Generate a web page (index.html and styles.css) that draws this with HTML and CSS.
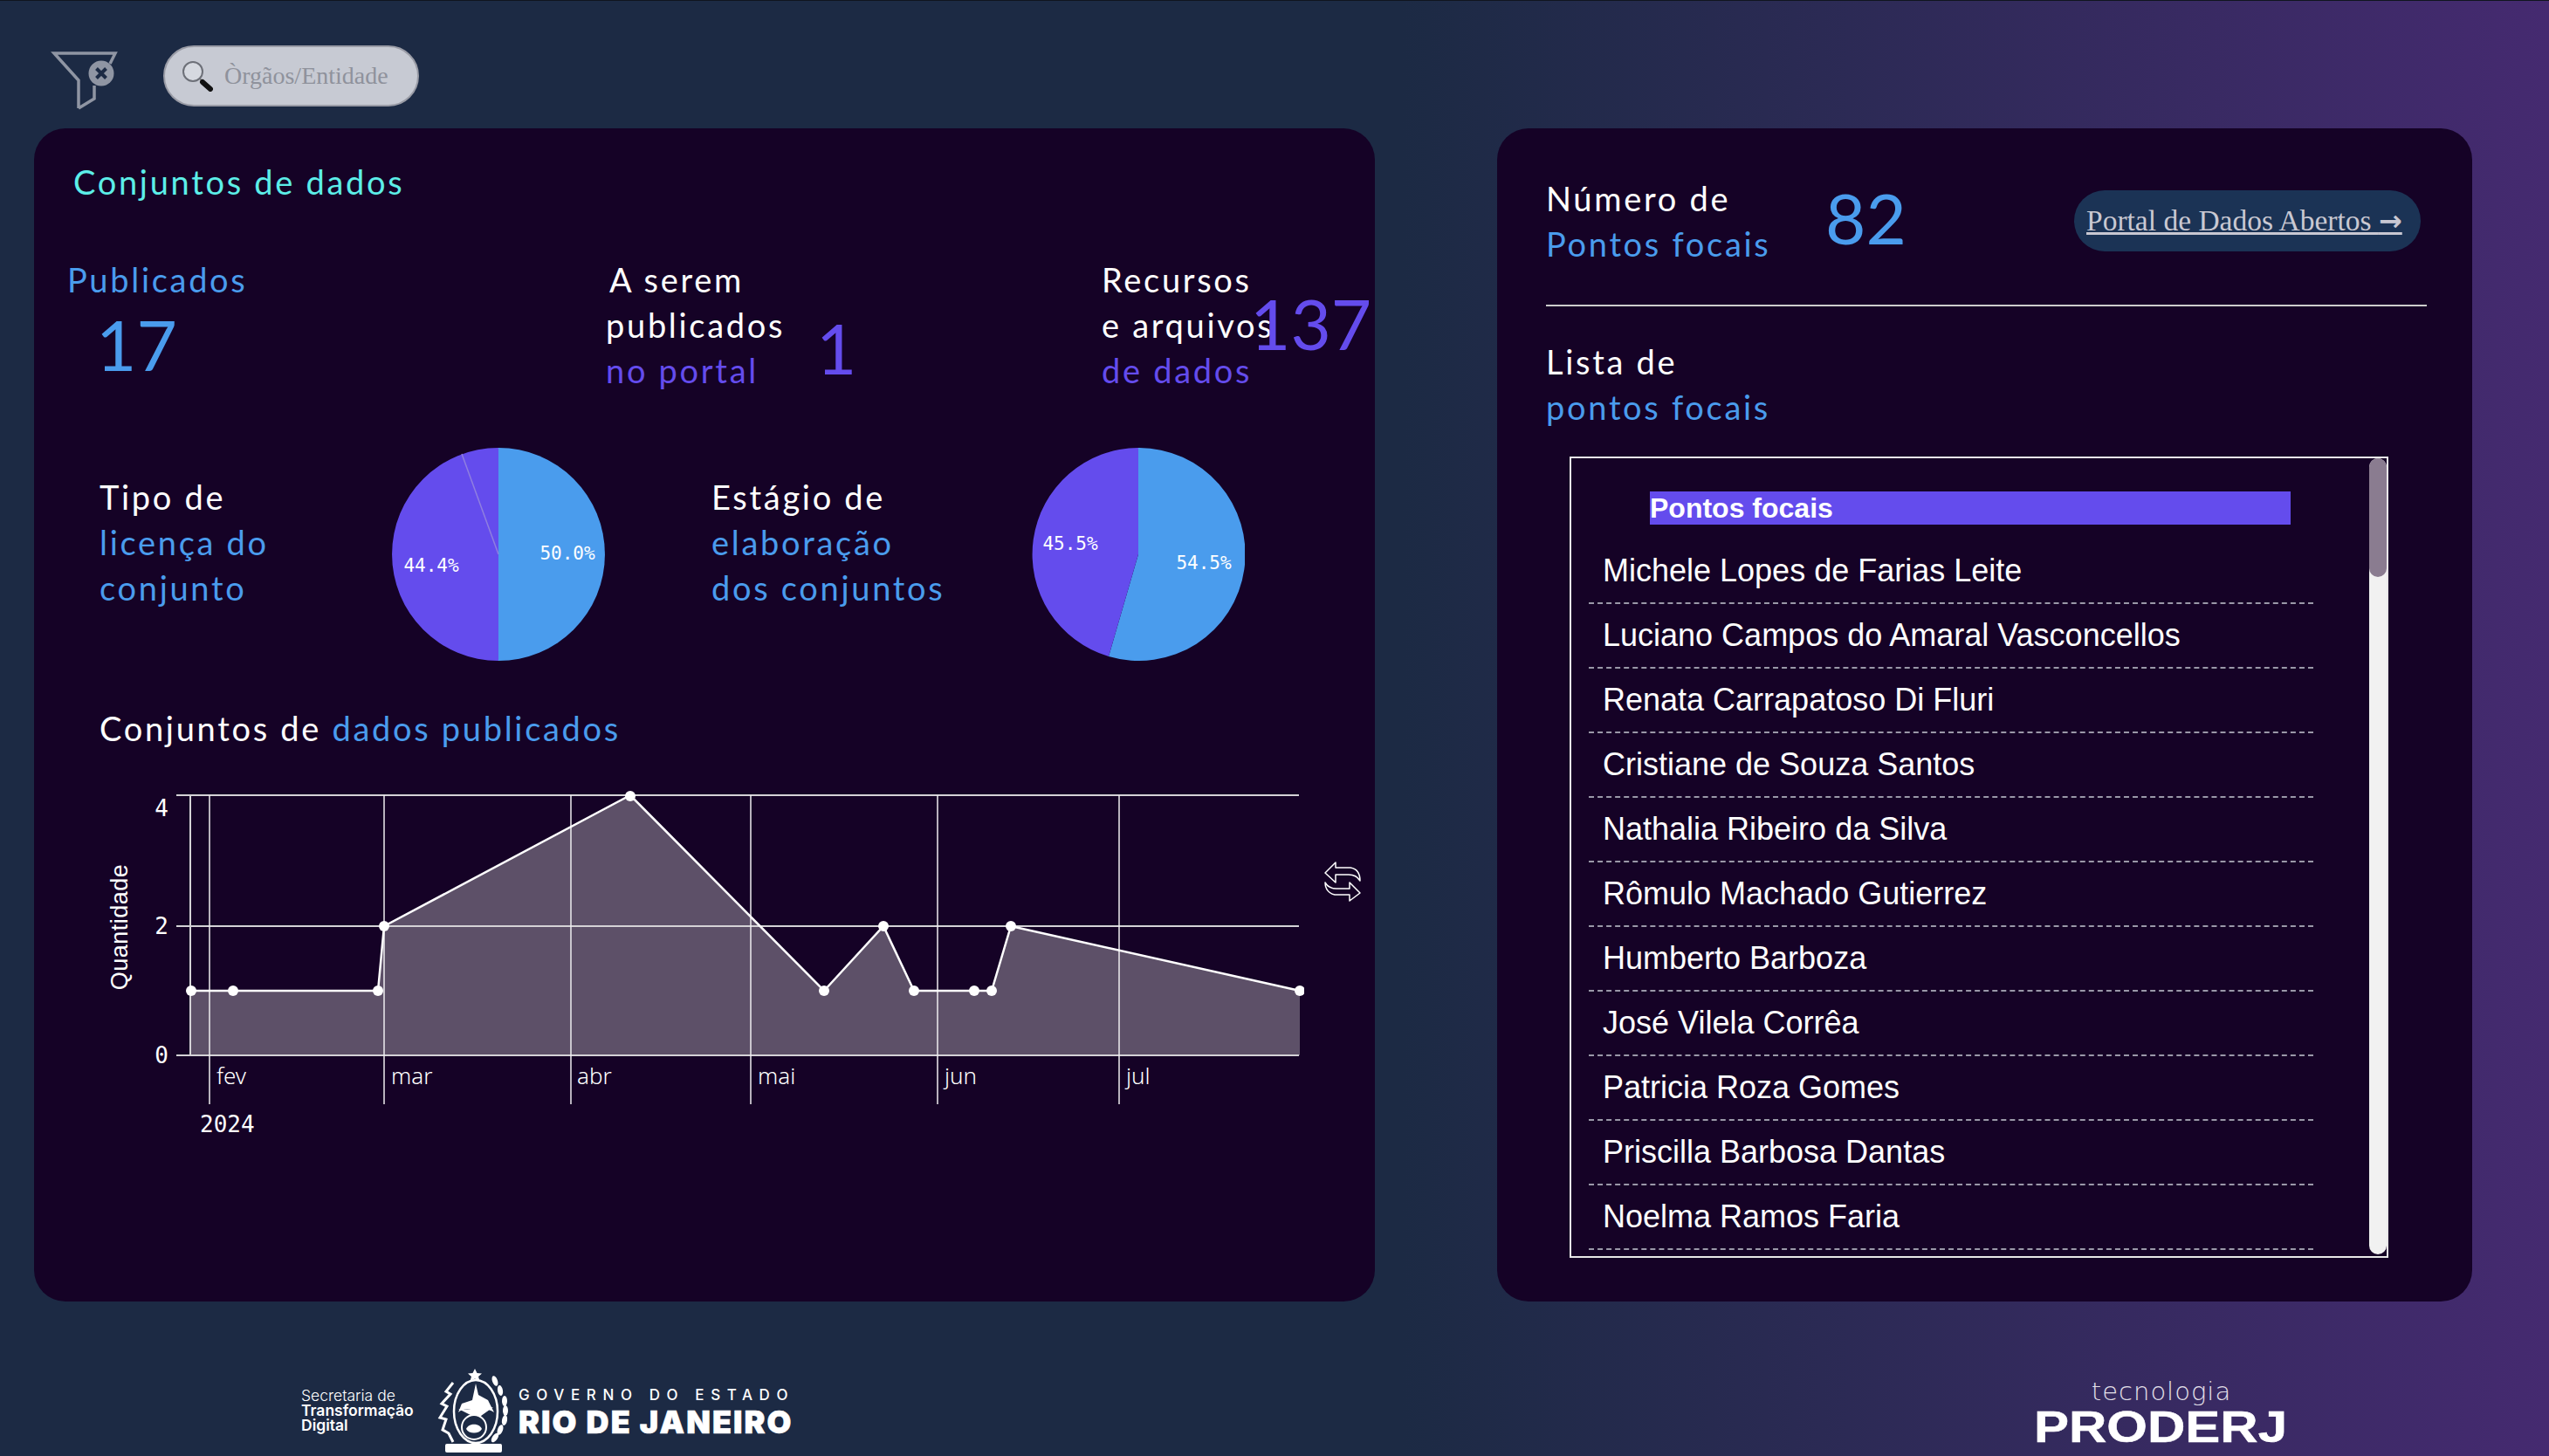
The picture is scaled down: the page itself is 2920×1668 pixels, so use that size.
FILE: index.html
```html
<!DOCTYPE html>
<html lang="pt-BR">
<head>
    <meta charset="UTF-8">
    <title>Painel de Dados Abertos</title>
    <link rel="stylesheet" href="styles.css">
</head>
<body>

    <div class="topbar">
        <svg class="filter-icon" viewBox="0 0 80 72" width="80" height="72">
            <path d="M32 66V34L4 3H74L68 15M32 66L50 55V40" fill="none" stroke="#8f95a3" stroke-width="3.5"/>
            <circle cx="58" cy="26" r="14.5" fill="#8f95a3"/>
            <path d="M52.5 20.5L63.5 31.5M63.5 20.5L52.5 31.5" stroke="#1c2a44" stroke-width="4"/>
        </svg>
        <div class="search">
            <svg class="search-icon" viewBox="0 0 36 36" width="36" height="36">
                <line x1="21" y1="21" x2="24" y2="25" stroke="#777" stroke-width="2"/>
                <line x1="24" y1="25" x2="33" y2="33" stroke="#111" stroke-width="6" stroke-linecap="round"/>
                <circle cx="13" cy="13" r="11" fill="#d6d9e0" stroke="#6d7078" stroke-width="2"/>
            </svg>
            <span>Òrgãos/Entidade</span>
        </div>
    </div>

    <main class="cards">
        <section class="card card-left">
            <h2 class="card-title">Conjuntos de dados</h2>

            <div class="stats">
                <div class="stat stat-one">
                    <div class="text blue">Publicados</div>
                    <div class="number blue number-17">17</div>
                </div>
                <div class="stat stat-two">
                    <div class="text stat-text-two"><span class="indent">A serem</span><br>publicados<br><span class="purple">no portal</span></div>
                    <div class="number purple number-1">1</div>
                </div>
                <div class="stat stat-three">
                    <div class="text stat-text-three">Recursos<br>e arquivos<br><span class="purple">de dados</span></div>
                    <div class="number purple number-137">137</div>
                </div>
            </div>

            <div class="pies">
                <div class="text pie-text-one">Tipo de<br><span class="blue">licença do<br>conjunto</span></div>
                <svg class="pie" viewBox="0 0 244 244" width="244" height="244">
                    <path d="M122 122V0A122 122 0 0 1 122 244Z" fill="#4a9ced"/>
                    <path d="M122 122V244A122 122 0 0 1 122 0Z" fill="#644ced"/>
                    <line x1="122" y1="122" x2="80" y2="7" stroke="#8f7fe0" stroke-width="1.5"/>
                    <text class="pie-label" x="201" y="128" text-anchor="middle">50.0%</text>
                    <text class="pie-label" x="45" y="142" text-anchor="middle">44.4%</text>
                </svg>
                <div class="text pie-text-two">Estágio de<br><span class="blue">elaboração<br>dos conjuntos</span></div>
                <svg class="pie" viewBox="0 0 244 244" width="244" height="244">
                    <path d="M122 122V0A122 122 0 1 1 88 239Z" fill="#4a9ced"/>
                    <path d="M122 122L88 239A122 122 0 0 1 122 0Z" fill="#644ced"/>
                    <text class="pie-label" x="197" y="139" text-anchor="middle">54.5%</text>
                    <text class="pie-label" x="44" y="117" text-anchor="middle">45.5%</text>
                </svg>
            </div>

            <div class="text chart-title">Conjuntos de <span class="blue">dados publicados</span></div>

            <div class="chart-row">
                <svg class="chart" viewBox="114 880 1380 430" width="1380" height="430">
                    <path d="M218 1209V1135H267H433L440 1061L722 911L944 1135L1012 1061L1047 1135H1116H1136L1158 1061L1489 1135V1209Z" fill="#5d5068"/>
                    <g stroke="#d4d2d6" stroke-width="2">
                        <line x1="202" y1="911" x2="1488" y2="911"/>
                        <line x1="202" y1="1061" x2="1488" y2="1061"/>
                        <line x1="202" y1="1209" x2="1488" y2="1209"/>
                        <line x1="218" y1="911" x2="218" y2="1209"/>
                    </g>
                    <g stroke="#efeef0" stroke-width="1.5">
                        <line x1="240" y1="911" x2="240" y2="1265"/>
                        <line x1="440" y1="911" x2="440" y2="1265"/>
                        <line x1="654" y1="911" x2="654" y2="1265"/>
                        <line x1="860" y1="911" x2="860" y2="1265"/>
                        <line x1="1074" y1="911" x2="1074" y2="1265"/>
                        <line x1="1282" y1="911" x2="1282" y2="1265"/>
                    </g>
                    <polyline points="219,1135 267,1135 433,1135 440,1061 722,911 944,1135 1012,1061 1047,1135 1116,1135 1136,1135 1158,1061 1489,1135" fill="none" stroke="#fff" stroke-width="2.5"/>
                    <g fill="#fff">
                        <circle cx="219" cy="1135" r="6"/>
                        <circle cx="267" cy="1135" r="6"/>
                        <circle cx="433" cy="1135" r="6"/>
                        <circle cx="440" cy="1061" r="6"/>
                        <circle cx="722" cy="912" r="6"/>
                        <circle cx="944" cy="1135" r="6"/>
                        <circle cx="1012" cy="1061" r="6"/>
                        <circle cx="1047" cy="1135" r="6"/>
                        <circle cx="1116" cy="1135" r="6"/>
                        <circle cx="1136" cy="1135" r="6"/>
                        <circle cx="1158" cy="1061" r="6"/>
                        <circle cx="1489" cy="1135" r="6"/>
                    </g>
                    <text class="axis-num" x="193" y="935" text-anchor="end">4</text>
                    <text class="axis-num" x="193" y="1070" text-anchor="end">2</text>
                    <text class="axis-num" x="193" y="1218" text-anchor="end">0</text>
                    <text class="axis-title" transform="translate(146 1062) rotate(-90)" text-anchor="middle">Quantidade</text>
                    <text class="axis-month" x="248" y="1242">fev</text>
                    <text class="axis-month" x="448" y="1242">mar</text>
                    <text class="axis-month" x="661" y="1242">abr</text>
                    <text class="axis-month" x="868" y="1242">mai</text>
                    <text class="axis-month" x="1082" y="1242">jun</text>
                    <text class="axis-month" x="1290" y="1242">jul</text>
                    <text class="axis-num" x="229" y="1297">2024</text>
                </svg>
                <svg class="swap-icon" viewBox="0 0 42 46" width="42" height="46">
                    <path d="M1 13L13 1V7H30C36 8 41 12 41 22C38 17 34 15 28 15H13V24Z" fill="none" stroke="#fff" stroke-width="1.5" stroke-linejoin="round"/>
                    <path d="M41 36L29 45V38H12C6 37 1 32 1 24C4 29 8 31 14 31H29V24Z" fill="none" stroke="#fff" stroke-width="1.5" stroke-linejoin="round"/>
                </svg>
            </div>
        </section>

        <section class="card card-right">
            <div class="focal-head">
                <div class="text">Número de<br><span class="blue">Pontos focais</span></div>
                <div class="number blue number-82">82</div>
                <a class="portal-link" href="#">Portal de Dados Abertos <span class="arrow">→</span></a>
            </div>

            <div class="text list-title">Lista de<br><span class="blue">pontos focais</span></div>

            <div class="list-box">
                <div class="list-header">Pontos focais</div>
                <ul class="focal-list">
                    <li>Michele Lopes de Farias Leite</li>
                    <li>Luciano Campos do Amaral Vasconcellos</li>
                    <li>Renata Carrapatoso Di Fluri</li>
                    <li>Cristiane de Souza Santos</li>
                    <li>Nathalia Ribeiro da Silva</li>
                    <li>Rômulo Machado Gutierrez</li>
                    <li>Humberto Barboza</li>
                    <li>José Vilela Corrêa</li>
                    <li>Patricia Roza Gomes</li>
                    <li>Priscilla Barbosa Dantas</li>
                    <li>Noelma Ramos Faria</li>
                </ul>
                <div class="scroll-track"><div class="scroll-thumb"></div></div>
            </div>
        </section>
    </main>

    <footer class="footer">
        <div class="gov-logo">
            <div class="secretaria">Secretaria de<br><strong>Transformação<br>Digital</strong></div>
            <svg class="arms" viewBox="0 0 82 96" width="82" height="96">
                <polygon points="43,0 45.5,5 51,5.5 47,9 48.5,14 43,11.5 37.5,14 39,9 35,5.5 40.500,5" fill="#fff"/>
                <ellipse cx="44" cy="49" rx="25" ry="36" fill="none" stroke="#fff" stroke-width="2.5"/>
                <path d="M44 17L47 30L58 36L65 50C56 44 48 46 44 50C38 45 30 45 24 50L28 40L40 36Z" fill="#fff"/>
                <path d="M24 46C34 47 50 47 64 44L50 54L44 60L38 53Z" fill="#fff"/>
                <circle cx="42" cy="67" r="14" fill="#1c2a44" stroke="#fff" stroke-width="2"/>
                <path d="M33 69C36 62 48 62 51 69C48 75 36 75 33 69Z" fill="#fff"/>
                <path d="M18 16L10 26L15 29L5 40L11 43L3 56L10 58L6 70L13 74L18 84" fill="none" stroke="#fff" stroke-width="3"/>
                <g fill="#fff">
                    <ellipse cx="66" cy="14" rx="3" ry="6" transform="rotate(-20 66 14)"/>
                    <ellipse cx="72" cy="25" rx="3" ry="6" transform="rotate(-10 72 25)"/>
                    <ellipse cx="77" cy="37" rx="3" ry="6"/>
                    <ellipse cx="78" cy="48" rx="3" ry="6"/>
                    <ellipse cx="77" cy="59" rx="3" ry="6" transform="rotate(10 77 59)"/>
                    <ellipse cx="72" cy="70" rx="3" ry="6" transform="rotate(20 72 70)"/>
                    <ellipse cx="66" cy="79" rx="3" ry="6" transform="rotate(35 66 79)"/>
                    <rect x="9" y="86" width="65" height="10" rx="2"/>
                </g>
            </svg>
            <div class="gov-name">
                <div class="gov-top">GOVERNO DO ESTADO</div>
                <div class="gov-bottom">RIO DE JANEIRO</div>
            </div>
        </div>
        <div class="proderj-logo">
            <div class="proderj-top">tecnologia</div>
            <div class="proderj-name">PRODERJ</div>
        </div>
    </footer>

</body>
</html>
```

FILE: styles.css
```css
html, body {
    margin: 0;
    height: 100%;
}

body {
    display: flex;
    flex-direction: column;
    box-sizing: border-box;
    height: 1668px;
    overflow: hidden;
    border-top: 1px solid #10151f;
    background: linear-gradient(to right, #1c2a44 55%, #452a70);
    font-family: Lato, "Noto Sans", sans-serif;
    color: white;
}

.topbar {
    display: flex;
    align-items: center;
    box-sizing: border-box;
    height: 146px;
    padding: 26px 0 0 58px;
}

.filter-icon {
    margin-top: 14px;
}

.search {
    display: flex;
    align-items: center;
    box-sizing: border-box;
    width: 293px;
    height: 70px;
    margin-left: 49px;
    padding-left: 19px;
    background: #c7cad3;
    border: 2px solid #9a9ca6;
    border-radius: 35px;
    font-family: "Liberation Serif", serif;
    font-size: 28px;
    color: #8f929c;
}

.search-icon {
    margin-right: 13px;
}

.cards {
    display: flex;
    justify-content: space-between;
    padding: 0 88px 0 39px;
}

.card {
    box-sizing: border-box;
    height: 1344px;
    background: #150226;
    border-radius: 36px;
}

.card-left {
    width: 1536px;
}

.card-right {
    width: 1117px;
    padding: 56px 52px 0 56px;
}

.text {
    font-size: 38px;
    line-height: 52px;
    letter-spacing: 2.7px;
    white-space: nowrap;
}

.blue {
    color: #4a9ced;
}

.purple {
    color: #644ced;
}

.number {
    font-size: 80px;
    line-height: 90px;
}

.card-title {
    margin: 35px 0 0 45px;
    font-size: 38px;
    font-weight: 400;
    line-height: 52px;
    letter-spacing: 2.7px;
    color: #5ceee8;
}

.stats {
    display: flex;
    height: 156px;
    margin-top: 60px;
    padding-left: 38px;
}

.stat-one {
    width: 617px;
}

.number-17 {
    margin: 3px 0 0 33px;
}

.stat-two {
    display: flex;
    align-items: flex-end;
    width: 568px;
}

.indent {
    margin-left: 4px;
}

.stat-text-two {
    width: 241px;
}

.number-1 {
    margin-bottom: 7px;
}

.stat-three {
    display: flex;
    align-items: flex-end;
}

.stat-text-three {
    width: 170px;
}

.number-137 {
    margin-bottom: 35px;
}

.pies {
    display: flex;
    margin-top: 63px;
    padding-left: 75px;
}

.pie-text-one {
    width: 335px;
    margin-top: 30px;
}

.pie-text-two {
    width: 367px;
    margin: 30px 0 0 122px;
}

.pie {
    flex: none;
}

.pie-label {
    font-family: "DejaVu Sans Mono", monospace;
    font-size: 21px;
    fill: #fff;
}

.chart-title {
    margin: 51px 0 0 75px;
}

.chart-row {
    display: flex;
    margin: 20px 0 0 75px;
}

.chart {
    flex: none;
}

.swap-icon {
    flex: none;
    margin: 107px 0 0 23px;
}

.axis-num {
    font-family: "DejaVu Sans Mono", monospace;
    font-size: 26px;
    fill: #fff;
}

.axis-month {
    font-family: "Noto Sans", sans-serif;
    font-size: 26px;
    font-weight: 300;
    fill: #fff;
}

.axis-title {
    font-family: "Liberation Sans", sans-serif;
    font-size: 27px;
    letter-spacing: 0.5px;
    fill: #fff;
}

.focal-head {
    display: flex;
    align-items: flex-start;
    padding-bottom: 44px;
    border-bottom: 2px solid #ccc;
}

.focal-head .text {
    width: 320px;
    margin-top: -2px;
}

.number-82 {
    margin-top: 1px;
}

.portal-link {
    margin: 15px 7px 0 auto;
    box-sizing: border-box;
    width: 397px;
    height: 70px;
    padding-left: 14px;
    background: #1b3355;
    border-radius: 35px;
    font-family: "Liberation Serif", serif;
    font-size: 33.5px;
    line-height: 70px;
    white-space: nowrap;
    color: #c9c8d2;
}

.arrow {
    font-family: "DejaVu Sans", sans-serif;
    font-size: 32px;
    font-weight: bold;
}

.list-title {
    margin-top: 37px;
}

.list-box {
    position: relative;
    box-sizing: border-box;
    width: 938px;
    height: 918px;
    margin: 31px 0 0 27px;
    overflow: hidden;
    border: 2px solid #e8e8e8;
    font-family: "Liberation Sans", sans-serif;
}

.scroll-track {
    position: absolute;
    top: 0;
    right: 0;
    width: 20px;
    height: 912px;
    background: #f1f1f1;
    border-radius: 10px;
}

.scroll-thumb {
    height: 136px;
    background: #8a7c90;
    border-radius: 10px;
}

.list-header {
    width: 734px;
    margin: 38px 0 0 90px;
    background: #644ced;
    font-size: 32px;
    font-weight: bold;
    line-height: 38px;
}

.focal-list {
    margin: 17px 0 0 20px;
    padding: 0;
    list-style: none;
}

.focal-list li {
    width: 830px;
    box-sizing: border-box;
    height: 74px;
    padding-left: 16px;
    border-bottom: 2px dashed #9a98a8;
    font-size: 36px;
    line-height: 72px;
}

.footer {
    display: flex;
    justify-content: space-between;
    padding: 78px 298px 0 345px;
}

.gov-logo {
    display: flex;
    align-items: flex-start;
    margin-top: -1px;
}

.secretaria {
    width: 156px;
    margin-top: 22px;
    font-family: Inter, "Liberation Sans", sans-serif;
    font-size: 17.5px;
    font-weight: 300;
    line-height: 17px;
}

.secretaria strong {
    font-weight: 600;
}

.gov-name {
    margin: 22px 0 0 11px;
}

.gov-top {
    font-family: Inter, sans-serif;
    font-size: 17px;
    font-weight: 500;
    line-height: 17px;
    letter-spacing: 7.6px;
    white-space: nowrap;
}

.gov-bottom {
    margin-top: 4px;
    font-family: Inter, sans-serif;
    font-size: 36px;
    font-weight: 900;
    line-height: 36px;
    letter-spacing: 2px;
    white-space: nowrap;
    -webkit-text-stroke: 0.6px white;
}

.proderj-logo {
    width: 292px;
    margin-top: 9px;
}

.proderj-top {
    font-family: "DejaVu Sans", sans-serif;
    font-size: 29px;
    font-weight: 200;
    line-height: 32px;
    letter-spacing: 1px;
    text-align: center;
    color: #e4e0ea;
}

.proderj-name {
    font-family: "Liberation Sans", sans-serif;
    font-size: 50px;
    font-weight: bold;
    line-height: 50px;
    transform: scaleX(1.2);
    transform-origin: left;
    -webkit-text-stroke: 0.5px white;
}
```
